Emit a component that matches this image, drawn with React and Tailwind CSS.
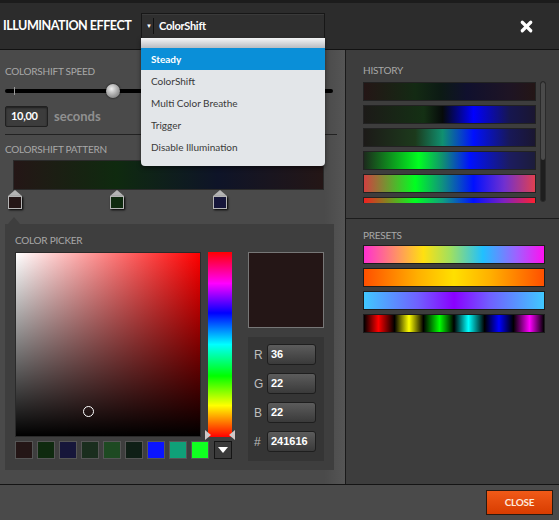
import React from 'react';
import { X } from 'lucide-react';

const historyBars = [
  'bg-[linear-gradient(to_right,#241616,#132a13_30%,#0c1a14_45%,#10102e_60%,#1e1424_85%,#241616)]',
  'bg-[linear-gradient(to_right,#1c1a18,#143014_35%,#060a0a_46%,#0000ff_64%,#161650_85%,#1a1630)]',
  'bg-[linear-gradient(to_right,#1c1a18,#1c3a1c_30%,#109070_46%,#0010ff_64%,#181858_85%,#1a1630)]',
  'bg-[linear-gradient(to_right,#1c2a1c,#00ff20_32%,#109070_46%,#0010ff_62%,#1c1c60_85%,#1c1c3a)]',
  'bg-[linear-gradient(to_right,#d04040,#00ff20_30%,#109080_46%,#0010ff_64%,#7030d0_82%,#e04050)]',
  'bg-[linear-gradient(to_right,#f02020,#00ff20_30%,#10a080_46%,#0010ff_64%,#8020c0_82%,#ff2030)]',
];

const presets = [
  'bg-[linear-gradient(to_right,#ff30d0,#ffe010_33%,#a0e060_48%,#20c0ff_66%,#a060ff_85%,#ff10f0)]',
  'bg-[linear-gradient(to_right,#ff5000,#ffb000_30%,#ffe000_50%,#ffb000_70%,#ff5000)]',
  'bg-[linear-gradient(to_right,#40c8ff,#7060ff_30%,#8a00ff_50%,#7060ff_70%,#40c8ff)]',
  'bg-[linear-gradient(to_right,#000_0%,#f00_8%,#000_17%,#ff0_25%,#000_33%,#0f0_42%,#000_50%,#0ff_58%,#000_67%,#00f_75%,#000_83%,#f0f_92%,#000_100%)]',
];

const swatches = [
  'bg-[#241616]',
  'bg-[#0f2a0f]',
  'bg-[#16163a]',
  'bg-[#1a2e1e]',
  'bg-[#1e4a22]',
  'bg-[#0f1f16]',
  'bg-[#0a14ff]',
  'bg-[#10a078]',
  'bg-[#10ff20]',
];

const stops = [
  { left: 'left-[1px]', color: 'bg-[#241616]' },
  { left: 'left-[103px]', color: 'bg-[#0f2a0f]' },
  { left: 'left-[206px]', color: 'bg-[#16163a]' },
];

const menuItems = ['Steady', 'ColorShift', 'Multi Color Breathe', 'Trigger', 'Disable Illumination'];

function Label({ children, className = '' }) {
  return <div className={`text-[10px] tracking-tight text-[#a8a8a8] ${className}`}>{children}</div>;
}

function RgbField({ label, value }) {
  return (
    <div className="flex items-center h-[21px]">
      <span className="w-[19px] pl-[6px] text-[12px] text-[#bdbdbd] font-['Liberation_Sans',sans-serif]">{label}</span>
      <div className="w-[49px] h-[21px] rounded-[3px] border border-[#1e1e1e] bg-[linear-gradient(to_bottom,#5c5c5c,#3a3a3a)] flex items-center pl-[3px] text-[11px] font-bold text-white font-['Liberation_Sans',sans-serif]">
        {value}
      </div>
    </div>
  );
}

export default function App() {
  return (
    <div className="w-[559px] h-[520px] overflow-hidden flex flex-col bg-[#4a4a4a] font-['Lato',sans-serif] select-none">
      {/* top strip */}
      <div className="h-[3px] bg-[#1c1c1c] shrink-0" />

      {/* Header */}
      <div className="h-[47px] shrink-0 bg-[#2c2c2c] border-b border-[#121212] flex items-center pl-[3px] pr-[24px] relative z-20">
        <h1 className="w-[138px] shrink-0 whitespace-nowrap text-[12.6px] font-bold text-white tracking-[-0.5px]">ILLUMINATION EFFECT</h1>
        <div className="relative">
          <div className="w-[184px] h-[26px] bg-[#2f2f2f] border border-[#171717] shadow-[inset_0_1px_0_#3a3a3a] flex items-center">
            <span className="w-[7px] ml-[4px] text-[6px] text-white leading-none">▼</span>
            <span className="h-[16px] w-px bg-[#111] mr-[5px]" />
            <span className="text-[11px] font-bold text-white tracking-tight">ColorShift</span>
          </div>
          {/* Open menu */}
          <div className="absolute left-0 top-[25px] w-[184px] bg-[#e3e6e9] rounded-b-[4px] shadow-[0_2px_4px_rgba(0,0,0,0.5)] pb-[8px]">
            <div className="h-[10px] bg-[linear-gradient(to_bottom,#f4f5f6,#b8bcc2)]" />
            {menuItems.map((item, i) => (
              <div
                key={item}
                className={`h-[22px] flex items-center pl-[10px] text-[10px] ${
                  i === 0 ? 'bg-[#0a8fd8] text-white font-bold' : 'text-[#3a3a3a]'
                }`}
              >
                {item}
              </div>
            ))}
          </div>
        </div>
        <div className="ml-auto">
          <X className="w-[17px] h-[17px] text-white" strokeWidth={4.5} />
        </div>
      </div>

      {/* Body */}
      <div className="flex-1 flex min-h-0 border-b border-[#141414]">
        {/* Left column */}
        <div className="w-[346px] shrink-0 border-r border-[#1a1a1a] bg-[linear-gradient(to_right,#4a4a4a_94%,#555_100%)] pt-[14px] pl-[5px] pr-[12px]">
          <Label>COLORSHIFT SPEED</Label>
          {/* Slider */}
          <div className="relative h-[14px] mt-[5px] flex items-center">
            <div className="w-full h-[4px] bg-black rounded-full" />
            <div className="absolute left-[9px] top-[3px] w-px h-[8px] bg-[#999]" />
            <div className="absolute left-[101px] top-0 w-[14px] h-[14px] rounded-full bg-[radial-gradient(circle_at_40%_35%,#eee,#9a9a9a_60%,#6a6a6a)] shadow-[0_0_2px_#000]" />
          </div>
          <div className="flex items-center mt-[8px] gap-[6px]">
            <div className="w-[43px] h-[21px] rounded-[2px] border border-[#202020] bg-[#3c3c3c] shadow-[inset_0_1px_2px_rgba(0,0,0,0.5)] flex items-center pl-[5px] text-[11px] font-bold text-white tracking-tight">
              10,00
            </div>
            <span className="text-[13px] font-bold text-[#909090]">seconds</span>
          </div>
          <div className="h-px bg-[#222] mt-[7px] mb-[7px] mr-[-4px]" />
          <Label>COLORSHIFT PATTERN</Label>

          {/* Pattern bar */}
          <div className="ml-[8px] mr-[9px] mt-[3px] h-[30px] border border-[#2a2a2a] bg-[linear-gradient(to_right,#241616,#0f2a0f_33%,#0e1428_66%,#241616)]" />
          <div className="relative h-[19px] ml-[2px]">
            {stops.map((s) => (
              <div key={s.left} className={`absolute top-0 ${s.left} flex flex-col items-center`}>
                <div className="w-0 h-0 border-l-[7px] border-r-[7px] border-b-[6px] border-l-transparent border-r-transparent border-b-[#b4b4b4]" />
                <div className={`w-[14px] h-[13px] border-[1.5px] border-[#b4b4b4] ${s.color} shadow-[1px_1px_2px_#000]`} />
              </div>
            ))}
          </div>

          {/* Color picker */}
          <div className="relative mt-[15px] w-[329px] h-[246px] bg-[#3e3e3e] pt-[9px] pl-[10px]">
            <div className="absolute -top-[7px] left-[3px] w-0 h-0 border-l-[6px] border-r-[6px] border-b-[7px] border-l-transparent border-r-transparent border-b-[#3e3e3e]" />
            <Label>COLOR PICKER</Label>
            <div className="flex mt-[4px]">
              <div>
                <div className="flex gap-[7px]">
                  <div className="relative w-[186px] h-[185px] border border-[#2a2a2a] bg-[linear-gradient(to_top,#000,transparent),linear-gradient(to_right,#fff,#f00)]">
                    <div className="absolute left-[67px] top-[153px] w-[11px] h-[11px] rounded-full border border-white" />
                  </div>
                  <div className="relative w-[24px] h-[185px] bg-[linear-gradient(to_bottom,#f00,#f0f_17%,#00f_33%,#0ff_50%,#0f0_67%,#ff0_83%,#f00)]">
                    <div className="absolute -left-[3px] bottom-[-3px] w-0 h-0 border-t-[5px] border-b-[5px] border-l-[6px] border-t-transparent border-b-transparent border-l-[#d0c8c8]" />
                    <div className="absolute -right-[3px] bottom-[-3px] w-0 h-0 border-t-[5px] border-b-[5px] border-r-[6px] border-t-transparent border-b-transparent border-r-[#d0c8c8]" />
                  </div>
                </div>
                <div className="flex gap-[4px] mt-[4px]">
                  {swatches.map((c, i) => (
                    <div key={i} className={`w-[18px] h-[18px] border border-[#555] ${c}`} />
                  ))}
                  <div className="w-[18px] h-[18px] ml-[1px] border border-[#151515] bg-[#3a3a3a] flex items-center justify-center">
                    <div className="w-0 h-0 border-l-[5px] border-r-[5px] border-t-[6px] border-l-transparent border-r-transparent border-t-white" />
                  </div>
                </div>
              </div>
              <div className="ml-[16px]">
                <div className="w-[76px] h-[76px] bg-[#241616] border border-[#777]" />
                <div className="mt-[9px] w-[76px] h-[124px] bg-[#353535] pt-[7px] flex flex-col gap-[8px]">
                  <RgbField label="R" value="36" />
                  <RgbField label="G" value="22" />
                  <RgbField label="B" value="22" />
                  <RgbField label="#" value="241616" />
                </div>
              </div>
            </div>
          </div>
        </div>

        {/* Right column */}
        <div className="flex-1 bg-[#3d3d3d] flex flex-col">
          <div className="h-[169px] border-b border-[#1c1c1c] pt-[13px] pl-[17px] pr-[13px]">
            <Label>HISTORY</Label>
            <div className="flex gap-[4px] mt-[3px]">
              <div className="flex-1 h-[122px] overflow-hidden flex flex-col gap-[4px] pt-[1px]">
                {historyBars.map((b, i) => (
                  <div key={i} className={`shrink-0 h-[19px] border border-[#222] ${b}`} />
                ))}
              </div>
              <div className="w-[6px] h-[121px] rounded-full bg-[#1e1e1e] border border-[#2a2a2a] overflow-hidden">
                <div className="h-[78px] bg-[#4a4a4a] rounded-full" />
              </div>
            </div>
          </div>
          <div className="pt-[9px] pl-[17px] pr-[14px]">
            <Label>PRESETS</Label>
            <div className="flex flex-col gap-[4px] mt-[2px]">
              {presets.map((p, i) => (
                <div key={i} className={`h-[19px] border border-[#1c1c1c] ${p}`} />
              ))}
            </div>
          </div>
        </div>
      </div>

      {/* Footer */}
      <div className="h-[35px] shrink-0 bg-[#4a4a4a] flex items-center justify-end pr-[6px]">
        <button className="w-[67px] h-[25px] bg-[linear-gradient(to_bottom,#f05a18,#d83c00)] border border-[#2a1a10] text-[10px] font-bold text-[#fde8dc] tracking-tight">
          CLOSE
        </button>
      </div>
    </div>
  );
}
